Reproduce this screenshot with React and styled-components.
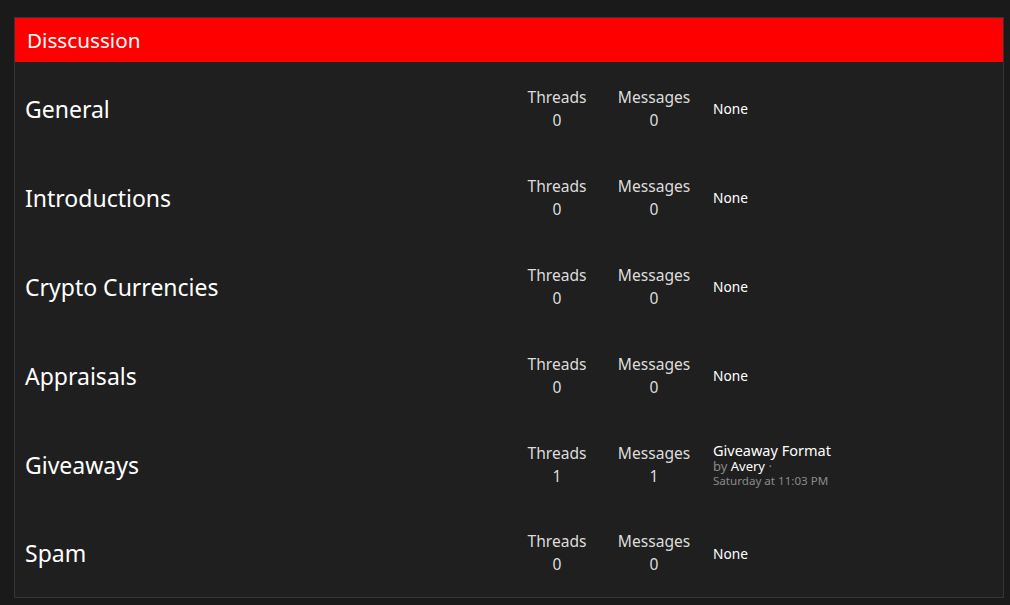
import React from "react";
import styled, { createGlobalStyle } from "styled-components";

const Global = createGlobalStyle`
  html, body { margin: 0; padding: 0; background: #1a1a1a; }
  body { font-family: "Noto Sans", "Open Sans", sans-serif; }
`;

const Page = styled.div`
  padding: 17px 6px 0 14px;
  min-height: 605px;
  box-sizing: border-box;
  background: #1a1a1a;
`;

const Panel = styled.section`
  border: 1px solid #333636;
  background: #1f1f1f;
`;

const Header = styled.h2`
  margin: 0;
  height: 44px;
  display: flex;
  align-items: center;
  padding-left: 12px;
  background: #ff0000;
  color: #ffffff;
  font-size: 20.7px;
  font-weight: 400;
`;

const Body = styled.div`
  padding-top: 2px;
`;

const Row = styled.div`
  display: flex;
  align-items: center;
  height: 89px;
  &:last-child { height: 88px; }
`;

const Title = styled.div`
  flex: 1;
  padding-left: 10px;
  color: #ffffff;
  font-size: 23px;
`;

const Stats = styled.div`
  display: flex;
  gap: 17px;
`;

const Stat = styled.div`
  width: 80px;
  display: flex;
  flex-direction: column;
  align-items: center;
  color: #dcdcdc;
  font-size: 15.6px;
  line-height: 23px;
`;

const Last = styled.div`
  width: 290px;
  margin-left: 19px;
  display: flex;
  flex-direction: column;
  color: #ffffff;
  font-size: 13.7px;
`;

const LastTitle = styled.div`
  font-size: 14.5px;
  line-height: 17px;
`;

const By = styled.div`
  font-size: 13px;
  line-height: 15px;
  color: #8a8a8a;
  span { color: #ffffff; }
`;

const Date = styled.div`
  font-size: 11.6px;
  line-height: 14px;
  color: #8a8a8a;
`;

const forums = [
  { name: "General", threads: 0, messages: 0 },
  { name: "Introductions", threads: 0, messages: 0 },
  { name: "Crypto Currencies", threads: 0, messages: 0 },
  { name: "Appraisals", threads: 0, messages: 0 },
  {
    name: "Giveaways",
    threads: 1,
    messages: 1,
    last: { title: "Giveaway Format", user: "Avery", date: "Saturday at 11:03 PM" },
  },
  { name: "Spam", threads: 0, messages: 0 },
];

export default function App() {
  return (
    <>
      <Global />
      <Page>
        <Panel>
          <Header>Disscussion</Header>
          <Body>
            {forums.map((f) => (
              <Row key={f.name}>
                <Title>{f.name}</Title>
                <Stats>
                  <Stat>
                    <div>Threads</div>
                    <div>{f.threads}</div>
                  </Stat>
                  <Stat>
                    <div>Messages</div>
                    <div>{f.messages}</div>
                  </Stat>
                </Stats>
                <Last>
                  {f.last ? (
                    <>
                      <LastTitle>{f.last.title}</LastTitle>
                      <By>
                        by <span>{f.last.user}</span> ·
                      </By>
                      <Date>{f.last.date}</Date>
                    </>
                  ) : (
                    "None"
                  )}
                </Last>
              </Row>
            ))}
          </Body>
        </Panel>
      </Page>
    </>
  );
}
